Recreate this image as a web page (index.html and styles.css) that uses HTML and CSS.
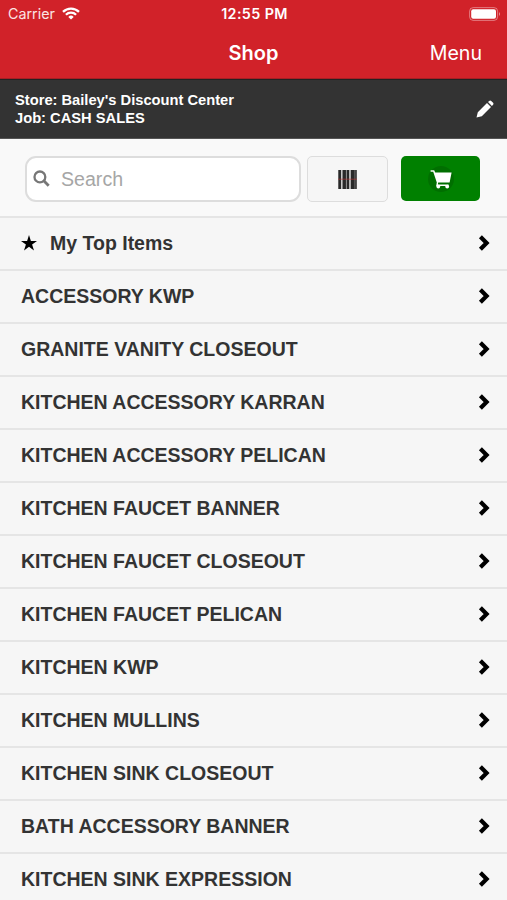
FILE: index.html
```
<!DOCTYPE html>
<html lang="en">
<head>
    <meta charset="UTF-8">
    <meta name="viewport" content="width=device-width, initial-scale=1.0">
    <title>Shop</title>
    <link rel="stylesheet" href="styles.css">
</head>
<body>
    <!-- Icons used more than once -->
    <svg class="sprite">
        <symbol id="chevron" viewBox="0 0 14 18">
            <path d="M3.4 2.8 L9.6 9 L3.4 15.2" fill="none" stroke="#000" stroke-width="4.2"/>
        </symbol>
    </svg>

    <header class="topbar">
        <div class="status">
            <div class="carrier">
                <span>Carrier</span>
                <svg class="wifi" viewBox="0 0 18 13">
                    <g fill="none" stroke="#fff" stroke-width="2.3">
                        <path d="M1 4.8 A11.5 11.5 0 0 1 17 4.8"/>
                        <path d="M3.9 7.8 A7.3 7.3 0 0 1 14.1 7.8"/>
                    </g>
                    <path d="M9 12.6 L6.3 9.9 A3.9 3.9 0 0 1 11.7 9.9 Z" fill="#fff"/>
                </svg>
            </div>
            <span class="time">12:55 PM</span>
            <svg class="battery" viewBox="0 0 32 14">
                <rect x="0.6" y="0.6" width="28" height="12.8" rx="3.6" fill="none" stroke="#fff" stroke-opacity="0.4"/>
                <rect x="2.2" y="2.2" width="24.8" height="9.6" rx="2" fill="#fff"/>
                <path d="M30 5 Q32 7 30 9 Z" fill="#fff" fill-opacity="0.5"/>
            </svg>
        </div>
        <div class="nav">
            <h1>Shop</h1>
            <a class="menu">Menu</a>
        </div>
    </header>

    <div class="store">
        <div>
            <p class="store-name">Store: Bailey's Discount Center</p>
            <p class="job">Job: CASH SALES</p>
        </div>
        <svg class="pencil" viewBox="0 0 18 18">
            <path d="M0.5 17.5 L1.8 12.3 L11 3.1 L15 7.1 L5.8 16.3 Z M12 2.1 L13.2 0.9 Q14.2 0 15.2 0.9 L17.1 2.8 Q18 3.8 17.1 4.8 L15.9 6 Z" fill="#fff"/>
        </svg>
    </div>

    <div class="tools">
        <div class="search">
            <svg class="glass" viewBox="0 0 17 17">
                <circle cx="6.9" cy="6.9" r="5.4" fill="none" stroke="#777" stroke-width="2.3"/>
                <path d="M10.8 10.8 L15.7 15.7" stroke="#777" stroke-width="2.8"/>
            </svg>
            <span class="placeholder">Search</span>
        </div>
        <div class="scan">
            <svg class="barcode" viewBox="0 0 19 19">
                <path d="M0 0h19v19H0z" fill="#8a8a8a"/>
                <path d="M0.6 0h2.6v19H0.6z M4.4 0h3.5v19H4.4z M9 0h2v19H9z M12.6 0h4v19h-4z M17.3 0h1.2v19h-1.2z" fill="#292929"/>
                <path d="M3.2 0h1.2v19H3.2z M11.5 0h1.1v19h-1.1z" fill="#ddd"/>
                <path d="M0 9.2h19" stroke="#b33" stroke-width="0.9" opacity="0.65"/>
            </svg>
        </div>
        <div class="cart">
            <svg class="cart-icon" viewBox="0 0 28 28">
                <circle cx="14" cy="14" r="13" fill="#006f00"/>
                <path d="M3.6 5.2 H7.2 L8.2 7.4 H24.6 L22.6 17.6 H11.2 L10.9 19.6 H21.6 V21 H9.2 L9.8 17.4 L6.2 6.8 H3.6 Z" fill="#fff"/>
                <circle cx="11.3" cy="21.6" r="1.9" fill="#fff"/>
                <circle cx="20.2" cy="21.6" r="1.9" fill="#fff"/>
            </svg>
        </div>
    </div>

    <ul class="list">
        <li>
            <span class="top-items">
                <svg class="star" viewBox="0 0 16 16">
                    <path d="M8 0 L9.9 5.9 H16 L11.1 9.5 L13 15.4 L8 11.8 L3 15.4 L4.9 9.5 L0 5.9 H6.1 Z" fill="#000"/>
                </svg>
                <span>My Top Items</span>
            </span>
            <svg class="arrow"><use href="#chevron"/></svg>
        </li>
        <li><span>ACCESSORY KWP</span><svg class="arrow"><use href="#chevron"/></svg></li>
        <li><span>GRANITE VANITY CLOSEOUT</span><svg class="arrow"><use href="#chevron"/></svg></li>
        <li><span>KITCHEN ACCESSORY KARRAN</span><svg class="arrow"><use href="#chevron"/></svg></li>
        <li><span>KITCHEN ACCESSORY PELICAN</span><svg class="arrow"><use href="#chevron"/></svg></li>
        <li><span>KITCHEN FAUCET BANNER</span><svg class="arrow"><use href="#chevron"/></svg></li>
        <li><span>KITCHEN FAUCET CLOSEOUT</span><svg class="arrow"><use href="#chevron"/></svg></li>
        <li><span>KITCHEN FAUCET PELICAN</span><svg class="arrow"><use href="#chevron"/></svg></li>
        <li><span>KITCHEN KWP</span><svg class="arrow"><use href="#chevron"/></svg></li>
        <li><span>KITCHEN MULLINS</span><svg class="arrow"><use href="#chevron"/></svg></li>
        <li><span>KITCHEN SINK CLOSEOUT</span><svg class="arrow"><use href="#chevron"/></svg></li>
        <li><span>BATH ACCESSORY BANNER</span><svg class="arrow"><use href="#chevron"/></svg></li>
        <li><span>KITCHEN SINK EXPRESSION</span><svg class="arrow"><use href="#chevron"/></svg></li>
    </ul>
</body>
</html>
```
FILE: styles.css
```
* {
    box-sizing: border-box;
}
body {
    margin: 0;
    height: 900px;
    overflow: hidden;
    background-color: #f9f9f9;
    font-family: "Liberation Sans", Arial, sans-serif;
    color: #333;
}
svg {
    display: block;
    flex: none;
}
.sprite {
    display: none;
}

/* Red header */
.topbar {
    height: 79px;
    background-color: #d12229;
    border-bottom: 1px solid #a51f24;
    color: #fff;
    font-family: Inter, sans-serif;
}
.status {
    display: grid;
    grid-template-columns: 1fr auto 1fr;
    align-items: center;
    height: 27px;
    padding: 0 6px 0 8px;
}
.carrier {
    display: flex;
    align-items: center;
    gap: 7px;
    font-size: 14.3px;
    color: #fbe3e4;
}
.wifi {
    width: 18px;
    height: 13px;
}
.time {
    font-size: 14.3px;
    font-weight: 600;
    letter-spacing: 0.4px;
}
.battery {
    width: 32px;
    height: 14px;
    justify-self: end;
}
.nav {
    display: grid;
    grid-template-columns: 1fr auto 1fr;
    align-items: center;
    height: 51px;
    padding: 0 25px;
}
.nav h1 {
    grid-column: 2;
    margin: 0;
    font-size: 20px;
    font-weight: 600;
}
.menu {
    justify-self: end;
    font-size: 19.6px;
}

/* Store and job */
.store {
    display: flex;
    align-items: center;
    justify-content: space-between;
    height: 60px;
    padding: 0 13px 0 15px;
    background-color: #333;
    border-top: 1px solid #222;
    border-bottom: 1px solid #555;
    color: #fff;
    font-size: 14.7px;
    font-weight: bold;
    line-height: 18px;
}
.store p {
    margin: 0;
}
.pencil {
    width: 18px;
    height: 18px;
}

/* Search row */
.tools {
    display: flex;
    height: 77px;
    padding: 17px 26px 0 25px;
}
.search {
    display: flex;
    align-items: center;
    width: 276px;
    height: 46px;
    padding-left: 6px;
    background-color: #fff;
    border: 2px solid #ddd;
    border-radius: 11px;
}
.glass {
    width: 17px;
    height: 17px;
    margin-bottom: 1px;
}
.placeholder {
    margin-left: 11px;
    font-size: 19.6px;
    color: #a6a6a6;
}
.scan,
.cart {
    display: flex;
    align-items: center;
    justify-content: center;
    border-radius: 5px;
}
.scan {
    width: 81px;
    height: 46px;
    margin-left: 6px;
    background-color: #f6f6f6;
    border: 1px solid #ddd;
}
.barcode {
    width: 19px;
    height: 19px;
}
.cart {
    width: 79px;
    height: 45px;
    margin-left: 13px;
    background-color: #008000;
}
.cart-icon {
    width: 28px;
    height: 28px;
}

/* Categories */
.list {
    margin: 0;
    padding: 0;
    list-style: none;
}
.list li {
    display: flex;
    align-items: center;
    justify-content: space-between;
    height: 53px;
    padding: 0 16px 0 21px;
    background-color: #f6f6f6;
    border-top: 2px solid #e5e5e5;
    font-size: 19.5px;
    font-weight: bold;
}
.top-items {
    display: flex;
    align-items: center;
    gap: 13px;
}
.star {
    width: 16px;
    height: 16px;
    margin-bottom: 2px;
}
.arrow {
    width: 14px;
    height: 18px;
    margin-bottom: 2px;
}
```
